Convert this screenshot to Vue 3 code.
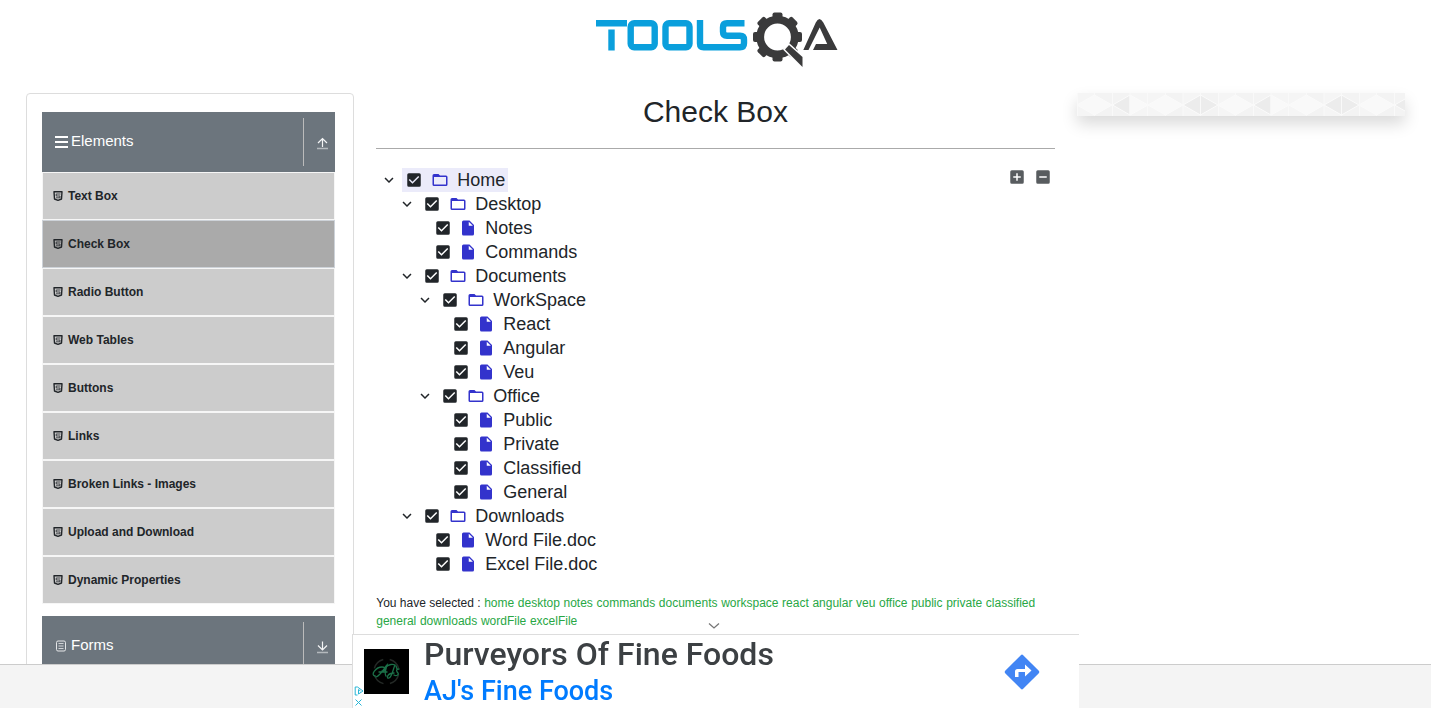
<script setup>
import { ref } from 'vue'

const menu = ['Text Box', 'Check Box', 'Radio Button', 'Web Tables', 'Buttons', 'Links', 'Broken Links - Images', 'Upload and Download', 'Dynamic Properties']

const nodes = ref([
  ['Home', 0, true], ['Desktop', 1, true], ['Notes', 2], ['Commands', 2],
  ['Documents', 1, true], ['WorkSpace', 2, true], ['React', 3], ['Angular', 3], ['Veu', 3],
  ['Office', 2, true], ['Public', 3], ['Private', 3], ['Classified', 3], ['General', 3],
  ['Downloads', 1, true], ['Word File.doc', 2], ['Excel File.doc', 2]
].map(([label, level, branch]) => ({ label, level, branch: !!branch, checked: true })))

const selected = ['home', 'desktop', 'notes', 'commands', 'documents', 'workspace', 'react', 'angular', 'veu', 'office', 'public', 'private', 'classified', 'general', 'downloads', 'wordFile', 'excelFile']
const teeth = [0, 45, 90, 135, 180, 225, 270, 315]
</script>

<template>
  <div class="page">
    <header class="top">
      <a href="#" aria-label="Tools QA">
        <svg class="logo" width="250" height="64" viewBox="591 6 250 64">
          <g fill="none" stroke="#0a9fdc" stroke-width="6.4">
            <path d="M596 23.2h31M611.500 29.500v21" />
            <rect x="630.700" y="23.200" width="24" height="24" rx="3.500" />
            <rect x="665.500" y="23.200" width="24" height="24" rx="3.500" />
            <path d="M700 20v23.500q0 3.700 3.700 3.700H740q4 0 4-4v-3.500q0-4-4-4H727q-4 0-4-4v-4.500q0-4 4-4h17.500" />
          </g>
          <g fill="#3a3a3b">
            <rect v-for="a in teeth" :key="a" x="772.500" y="12.500" width="10" height="10" rx="2" :transform="`rotate(${a} 777.5 37)`" />
          </g>
          <circle cx="777.500" cy="37" r="17.300" fill="none" stroke="#3a3a3b" stroke-width="7.800" />
          <path d="M783 49.500l6-6.500 14.500 13v12h-2z" fill="#fff" />
          <path d="M785 49.500l4-4.500 13.500 12v10z" fill="#3a3a3b" />
          <path d="M803.300 50l12.500-27.500q3.500-7 7.500 0L837.500 50h-24.500l3-6h11.200l-7.500-16.500L808.500 50z" fill="#3a3a3b" />
        </svg>
      </a>
    </header>

    <div class="columns">
      <aside class="side">
        <button type="button" class="group">
          <svg class="gicon" width="16" height="16" viewBox="0 0 16 16"><path d="M2 3h13M2 8h13M2 13h13" stroke="#fff" stroke-width="2" /></svg>
          <span>Elements</span>
          <span class="arrow"><svg width="16" height="16" viewBox="0 0 16 16" fill="none" stroke="#f4f5f6"><path d="M8.500 12V4M4 8l4.500-4.500L13 8" stroke-width="1.200" /><path d="M3 13.500h11" stroke="#b4b9bd" stroke-width="1.500" /></svg></span>
        </button>
        <ul class="menu">
          <li v-for="item in menu" :key="item" :class="{ active: item === 'Check Box' }">
            <a href="#">
              <svg width="12" height="12" viewBox="0 0 12 12" fill="none" stroke="#212529"><path d="M2 1.700h8l-.5 7.300L6 10.300 2.500 9z" stroke-width="1.400" stroke-linejoin="round" /><path d="M8.500 4H4.200v2H8v1.800H4" stroke-width=".8" /></svg>
              <span>{{ item }}</span>
            </a>
          </li>
        </ul>
        <button type="button" class="group">
          <svg class="gicon" width="16" height="16" viewBox="0 0 16 16" fill="none" stroke="#fff"><rect x="3.500" y="3" width="9" height="10" rx="1.500" stroke="#e4e6e8" /><path d="M5.500 5.500h5M5.500 8h5M5.500 10.500h5" stroke="#d0d3d6" /></svg>
          <span>Forms</span>
          <span class="arrow"><svg width="16" height="16" viewBox="0 0 16 16" fill="none" stroke="#f4f5f6"><path d="M8.500 2.500v8M4 6.500l4.500 4.500L13 6.500" stroke-width="1.200" /><path d="M3 13.500h11" stroke="#b4b9bd" stroke-width="1.500" /></svg></span>
        </button>
      </aside>

      <main class="content">
        <h1>Check Box</h1>
        <hr>
        <div class="tree">
          <ol>
            <li v-for="n in nodes" :key="n.label" :class="[`level-${n.level}`, n.branch ? 'branch' : 'leaf', { current: n.label === 'Home' }]">
              <button v-if="n.branch" type="button" class="toggle" aria-label="Toggle">
                <svg width="18" height="18" viewBox="0 0 24 24" fill="#212529"><path d="M7.410 8.590 12 13.170l4.590-4.580L18 10l-6 6-6-6z" /></svg>
              </button>
              <label>
                <input v-model="n.checked" type="checkbox">
                <svg class="box" width="18" height="18" viewBox="0 0 24 24" fill="#212529"><path v-if="n.checked" d="M19 3H5a2 2 0 0 0-2 2v14a2 2 0 0 0 2 2h14a2 2 0 0 0 2-2V5a2 2 0 0 0-2-2zm-9 14-5-5 1.410-1.410L10 14.170l7.590-7.590L19 8z" /><path v-else d="M19 5v14H5V5zm0-2H5a2 2 0 0 0-2 2v14a2 2 0 0 0 2 2h14a2 2 0 0 0 2-2V5a2 2 0 0 0-2-2z" /></svg>
                <svg class="kind" width="18" height="18" viewBox="0 0 24 24" fill="#33c"><path v-if="n.branch" d="M20 6h-8l-2-2H4a2 2 0 0 0-2 2v12a2 2 0 0 0 2 2h16a2 2 0 0 0 2-2V8a2 2 0 0 0-2-2zm0 12H4V8h16z" /><path v-else d="M6 2a2 2 0 0 0-2 2v16a2 2 0 0 0 2 2h12a2 2 0 0 0 2-2V8l-6-6zm7 7V3.500L18.500 9z" /></svg>
                <span>{{ n.label }}</span>
              </label>
            </li>
          </ol>
          <div class="actions">
            <button type="button" aria-label="Expand all"><svg width="18" height="18" viewBox="0 0 24 24" fill="#585c5f"><path d="M19 3H5a2 2 0 0 0-2 2v14a2 2 0 0 0 2 2h14a2 2 0 0 0 2-2V5a2 2 0 0 0-2-2zm-2 10h-4v4h-2v-4H7v-2h4V7h2v4h4z" /></svg></button>
            <button type="button" aria-label="Collapse all"><svg width="18" height="18" viewBox="0 0 24 24" fill="#585c5f"><path d="M19 3H5a2 2 0 0 0-2 2v14a2 2 0 0 0 2 2h14a2 2 0 0 0 2-2V5a2 2 0 0 0-2-2zm-2 10H7v-2h10z" /></svg></button>
          </div>
        </div>
        <p class="result"><span>You have selected :</span>{{ ' ' }}<template v-for="s in selected" :key="s"><span class="picked">{{ s }}</span>{{ ' ' }}</template></p>
      </main>

      <div class="extra">
        <svg class="banner" width="100%" height="23">
          <defs>
            <pattern id="triangles" width="141" height="23" patternUnits="userSpaceOnUse">
              <rect width="141" height="23" fill="#f3f3f3" />
              <path d="M0 0h18v23H0zM53 0h35v23H53zM106 0h17v23h-17z" fill="#f5f5f5" />
              <g stroke="#fbfbfb" stroke-width="1">
                <path d="M0 12L17.500 2v20zM35 12L17.500 2v20zM71 12L53 2v20zM71 12L88.500 2v20zM106 12L88.500 2v20z" fill="#f9f9f9" />
                <path d="M35.500 12L53 2v20zM106 12l17.500-10v20zM141 12L123.500 2v20z" fill="#ececec" />
                <path d="M.5 0v23M17.500 0v23M35.500 0v23M53 0v23M70.500 0v23M88.500 0v23M106 0v23M123.500 0v23" stroke="#f9f9f9" />
              </g>
            </pattern>
          </defs>
          <rect width="100%" height="23" fill="url(#triangles)" />
        </svg>
      </div>
    </div>

    <footer class="footer"></footer>

    <section class="ad">
      <button type="button" class="fold" aria-label="Hide"><svg width="12" height="8" viewBox="0 0 12 8"><path d="M1 1.500l5 4.500 5-4.500" fill="none" stroke="#777" stroke-width="1.300" /></svg></button>
      <div class="choices">
        <svg width="10" height="10" viewBox="0 0 10 10" fill="none" stroke="#27b5d6"><path d="M3.500 1H1.200v8h2.300M3.500 1L9 5 4.500 8V3.500L6.500 5" /></svg>
        <svg width="10" height="10" viewBox="0 0 10 10" fill="none" stroke="#27b5d6"><path d="M1.500 1.500l6 6M7.500 1.500l-6 6" /></svg>
      </div>
      <svg class="brand" width="45" height="45" viewBox="0 0 45 45">
        <rect width="45" height="45" />
        <circle cx="22.500" cy="22.500" r="12.500" fill="none" stroke="#242926" stroke-width="1.500" stroke-dasharray="13 6.600" stroke-dashoffset="-3" />
        <g fill="none" stroke="#1b7048" stroke-width="1.300" stroke-linecap="round">
          <path d="M11 27c-5-1 1-9 7-9 4 0 4 4 0 4M12 28c5-2 8-9 11-12-1 4-3 9-1 11M15 23h8M22 18c3-3 7-3 9-2-2 4-3 12-6 13-3 1-2-5 5-5M32 17l1 3M35 20c-4 0-2 3-1 4s-1 4-4 2" />
        </g>
      </svg>
      <div class="copy">
        <a href="#" class="headline">Purveyors Of Fine Foods</a>
        <a href="#" class="name">AJ's Fine Foods</a>
      </div>
      <a href="#" class="go" aria-label="Directions">
        <svg width="36" height="36" viewBox="0 0 36 36"><path d="M16.800 1.200q1.200-1.200 2.400 0L34.800 16.800q1.200 1.200 0 2.400L19.200 34.800q-1.200 1.200-2.400 0L1.200 19.200q-1.200-1.200 0-2.400z" fill="#4285f4" /><path d="M11 23v-5.500q0-2.500 2.500-2.500H21v-4.500l6.500 6-6.500 6V18h-6.500v5z" fill="#fff" /></svg>
      </a>
    </section>
  </div>
</template>

<style>
body { margin: 0; background: #fff; }
</style>

<style scoped>
* { box-sizing: border-box; }
svg { display: block; flex: none; }
button { border: 0; padding: 0; background: none; font: inherit; color: inherit; cursor: pointer; }
a { color: inherit; text-decoration: none; }
ol, ul { list-style: none; margin: 0; padding: 0; }
.page { height: 100vh; overflow: hidden; padding-right: 9px; font-family: "Liberation Sans", Arial, sans-serif; color: #212529; }
.top { display: flex; justify-content: center; padding: 6px 0 23px; }
.columns { display: grid; grid-template-columns: 1fr 2fr 1fr; padding: 0 15px; }
.side, .content, .extra { margin: 0 11px; min-width: 0; }
.side { border: 1px solid #ddd; border-radius: 4px; padding: 18px 18px 18px 15px; }
.group { display: flex; align-items: center; width: 100%; height: 60px; padding: 0 0 2px 11px; background: #6c757d; color: #fff; font-size: 15px; line-height: 18px; text-align: left; }
.gicon { margin: 2px 2px 0 0; }
.arrow { display: flex; align-items: center; margin: 2px 0 0 auto; height: 48px; width: 32px; padding: 2px 0 0 10px; border-left: 1px solid #bbb; }
.menu { margin-bottom: 12px; }
.menu li { height: 48px; border: 1px solid #f6f6f6; background: #ccc; font-size: 12px; font-weight: 700; }
.menu li.active { background: #aaa; border-color: #cdd2d8; }
.menu a { display: flex; align-items: center; gap: 4px; height: 100%; padding-left: 9px; }
h1 { margin: 0; padding-top: 1px; font-size: 30px; line-height: 36px; font-weight: 400; text-align: center; }
hr { margin: 18px 0 19px; border: 0; border-top: 1px solid #aaa; }
.tree { display: flex; align-items: flex-start; }
.tree ol { flex: 1; }
.tree li { display: flex; height: 24px; font-size: 18px; line-height: 24px; }
.toggle { padding: 0 4px; }
.leaf { padding-left: 19px; }
.level-1 { margin-left: 18px; }
.level-2 { margin-left: 36px; }
.level-3 { margin-left: 54px; }
.tree label { position: relative; display: flex; align-items: center; padding: 0 3px; cursor: pointer; }
.current label { background: #ebebfa; }
.tree input { position: absolute; left: 3px; top: 3px; width: 18px; height: 18px; margin: 0; opacity: 0; }
.box { margin-right: 8px; }
.leaf .box { margin-right: 7px; }
.kind { margin-right: 8px; }
.actions { display: flex; gap: 8px; padding-right: 3px; }
.result { margin: 18px 0 0; font-size: 13px; line-height: 18px; }
.result span { font-size: 12px; }
.result .picked { color: #28a745; }
.banner { box-shadow: 0 8px 16px rgba(0, 0, 0, .15); }
.footer { position: fixed; left: 0; right: 9px; bottom: 0; height: 44px; background: #f4f4f4; border-top: 1px solid #ccc; }
.ad { position: fixed; bottom: 0; left: calc(50% - 368px); width: 727px; height: 74px; display: flex; align-items: flex-start; background: #fff; border: solid #ddd; border-width: 1px 0 0 1px; }
.fold { position: absolute; top: -13px; left: 355px; }
.choices { display: flex; flex-direction: column; gap: 2px; padding: 51px 0 0 1px; }
.brand { margin-top: 14px; }
.copy { display: flex; flex-direction: column; flex: 1; padding-left: 15px; font-family: Roboto, sans-serif; font-weight: 500; white-space: nowrap; }
.headline { font-size: 32px; line-height: 38px; color: #3c4043; }
.name { font-size: 27px; line-height: 36px; color: #007bff; }
.go { padding: 19px 39px 0 0; }
</style>
